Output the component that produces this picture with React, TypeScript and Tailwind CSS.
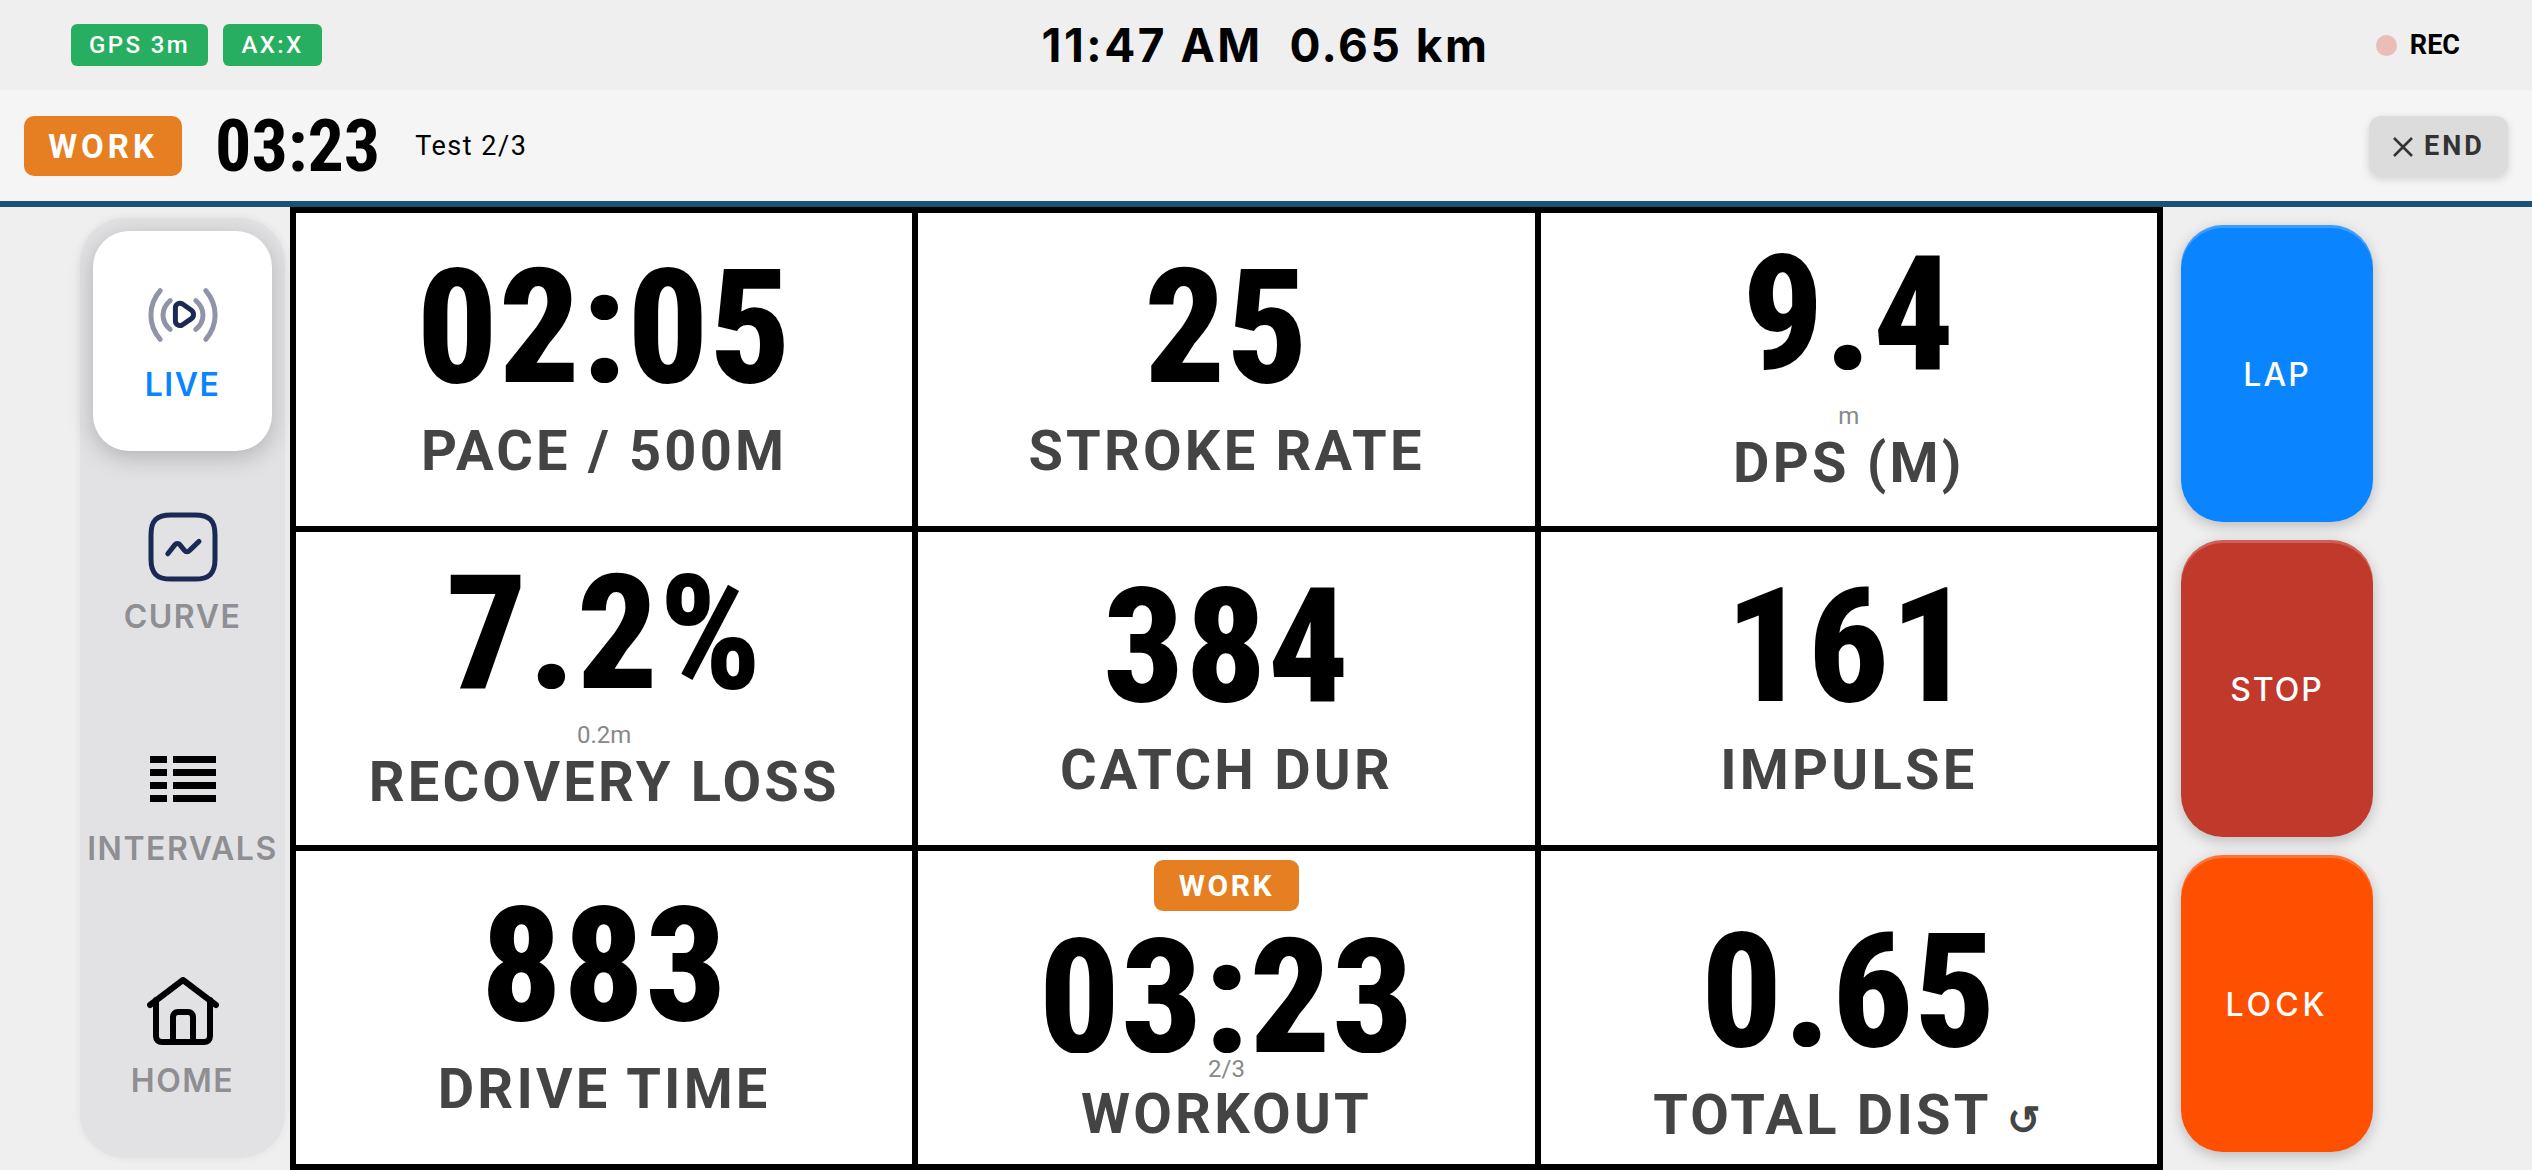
import { ReactNode } from "react";

const NavItem = ({ label, icon, active }: { label: string; icon: ReactNode; active?: boolean }) => (
  <div
    className={`flex h-[220px] w-[179px] flex-col items-center justify-center rounded-[36px] pb-[12px] ${
      active ? "bg-white shadow-[0_6px_24px_rgba(0,0,0,0.22)]" : ""
    }`}
  >
    <div className="flex h-[96px] items-center justify-center">{icon}</div>
    <span
      className={`mt-[4px] font-['Inter',sans-serif] text-[32px] leading-[36px] font-semibold tracking-[1.5px] ${
        active ? "text-[#0a84ff]" : "text-[#8e8e93]"
      }`}
    >
      {label}
    </span>
  </div>
);

const LiveIcon = () => (
  <svg width="96" height="96" viewBox="0 0 24 24" fill="none" strokeWidth="1.25" strokeLinecap="round" strokeLinejoin="round">
    <path d="M6.3 5.9C3.2 9.5 3.2 14.5 6.3 18.1M17.7 5.9C20.8 9.5 20.8 14.5 17.7 18.1M8.8 8.4C6.4 10.4 6.4 13.6 8.8 15.6M15.2 8.4C17.6 10.4 17.6 13.6 15.2 15.6" stroke="#8f94a8" />
    <path d="M10.1 10.2c0-.9.9-1.4 1.7-1l2.3 1.6c.7.5.7 1.6 0 2.1l-2.3 1.6c-.8.4-1.7-.1-1.7-1z" stroke="#1b2a55" />
  </svg>
);

const CurveIcon = () => (
  <svg width="96" height="96" viewBox="0 0 24 24" fill="none" stroke="#1b2a55" strokeWidth="1.25" strokeLinecap="round" strokeLinejoin="round">
    <path d="M9 4h6c3.6 0 5 1.4 5 5v6c0 3.6-1.4 5-5 5H9c-3.6 0-5-1.4-5-5V9c0-3.6 1.4-5 5-5z" />
    <path d="M8.2 13.7L10 11.4c.3-.4.9-.4 1.2 0l1.2 1.5c.3.4.9.4 1.2 0L16 10.6" />
  </svg>
);

const ListIcon = () => (
  <svg width="66" height="46" viewBox="0 0 66 46" fill="#000">
    {[0, 13, 26, 39].map((y) => (
      <g key={y}>
        <rect x="0" y={y} width="17" height="7" />
        <rect x="23" y={y} width="43" height="7" />
      </g>
    ))}
  </svg>
);

const HomeIcon = () => (
  <svg width="72" height="68" viewBox="0 0 72 68" fill="none" stroke="#000" strokeWidth="6" strokeLinecap="round" strokeLinejoin="round">
    <path d="M3 28L36 3l33 25" />
    <path d="M9 23v36c0 4 2.500 6 6 6h42c3.500 0 6-2 6-6V23" />
    <path d="M26 65V40c0-3 2-5 5-5h10c3 0 5 2 5 5v25" />
  </svg>
);

const Metric = ({ value, label, sub, pad = "" }: { value: string; label: ReactNode; sub?: string; pad?: string }) => (
  <div className={`flex min-w-0 flex-col items-center justify-center bg-white pb-[4px] ${pad}`}>
    <div className="mb-[16px] h-[150px] font-['Roboto',sans-serif] text-[160px] leading-[150px] font-extrabold font-stretch-condensed tracking-[1px] text-black">
      {value}
    </div>
    {sub && <div className="mt-[-2px] mb-[2px] font-['Roboto',sans-serif] text-[24px] leading-[25px] text-[#888]">{sub}</div>}
    <div className="font-['Roboto',sans-serif] text-[56px] leading-[64px] font-bold tracking-[3.2px] text-[#444]">{label}</div>
  </div>
);

const SideButton = ({ label, color, spacing }: { label: string; color: string; spacing: string }) => (
  <div className={`flex h-[297px] w-[192px] items-center justify-center rounded-[42px] pt-[3px] font-['Inter',sans-serif] text-[32px] font-medium text-white shadow-[0_4px_14px_rgba(0,0,0,0.22),inset_0_3px_0_rgba(255,255,255,0.2)] ${color} ${spacing}`}>
    {label}
  </div>
);

export default function App() {
  return (
    <div className="flex h-[1170px] w-[2532px] flex-col overflow-hidden bg-[#efefef]">
      <div className="flex h-[90px] items-center pr-[72px] pl-[71px]">
        <div className="flex flex-1 gap-[15px] font-['Roboto',sans-serif] text-[24px] font-medium tracking-[2.4px] text-white">
          <span className="flex h-[42px] w-[137px] items-center justify-center rounded-[6px] bg-[#27ae60]">GPS 3m</span>
          <span className="flex h-[42px] w-[99px] items-center justify-center rounded-[6px] bg-[#27ae60]">AX:X</span>
        </div>
        <div className="font-['Inter',sans-serif] text-[46px] font-bold tracking-[2.5px] whitespace-pre text-black">11:47 AM  0.65 km</div>
        <div className="flex flex-1 items-center justify-end gap-[13px]">
          <span className="h-[21px] w-[21px] rounded-full bg-[#ecbcb8]" />
          <span className="font-['Roboto',sans-serif] text-[27px] font-bold text-black">REC</span>
        </div>
      </div>
      <div className="flex h-[117px] items-center border-b-[6px] border-[#1a5276] bg-[#f5f5f5] px-[24px]">
        <span className="flex h-[60px] w-[158px] items-center justify-center rounded-[10px] bg-[#e67e22] pt-[2px] font-['Roboto',sans-serif] text-[33px] font-bold tracking-[4px] text-white">WORK</span>
        <span className="ml-[33px] pt-[2px] font-['Roboto',sans-serif] text-[72px] font-bold font-stretch-condensed text-black">03:23</span>
        <span className="ml-[35px] pt-[2px] font-['Roboto',sans-serif] text-[27px] tracking-[1.5px] text-black">Test 2/3</span>
        <span className="ml-auto flex h-[60px] w-[139px] items-center justify-center gap-[10px] rounded-[12px] bg-[#dcdcdc] pt-[2px] font-['Roboto',sans-serif] text-[27px] font-bold tracking-[3px] text-[#333] shadow-[0_3px_8px_rgba(0,0,0,0.15)]">
          <svg width="22" height="22" viewBox="0 0 22 22" stroke="#333" strokeWidth="2.5"><path d="M2 2l18 18M20 2L2 20" /></svg>
          END
        </span>
      </div>
      <div className="flex min-h-0 flex-1">
        <div className="mt-[11px] ml-[80px] flex h-[940px] w-[205px] flex-col items-center gap-[12px] rounded-[45px] bg-[#e2e2e5] pt-[13px] shadow-[0_0_8px_rgba(0,0,0,0.06)]">
          <NavItem label="LIVE" icon={<LiveIcon />} active />
          <NavItem label="CURVE" icon={<CurveIcon />} />
          <NavItem label="INTERVALS" icon={<ListIcon />} />
          <NavItem label="HOME" icon={<HomeIcon />} />
        </div>
        <div className="ml-[5px] grid h-[963px] w-[1873px] grid-cols-3 grid-rows-3 gap-[6px] bg-black p-[6px]">
          <Metric value="02:05" label="PACE / 500M" />
          <Metric value="25" label="STROKE RATE" />
          <Metric value="9.4" label="DPS (M)" sub="m" />
          <Metric value="7.2%" label="RECOVERY LOSS" sub="0.2m" />
          <Metric value="384" label="CATCH DUR" />
          <Metric value="161" label="IMPULSE" />
          <Metric value="883" label="DRIVE TIME" />
          <div className="flex min-w-0 flex-col items-center bg-white pt-[9px]">
            <span className="flex h-[51px] w-[145px] items-center justify-center rounded-[9px] bg-[#e67e22] font-['Roboto',sans-serif] text-[30px] font-bold tracking-[2.5px] text-white">WORK</span>
            <div className="mt-[12px] h-[130px] overflow-hidden font-['Roboto',sans-serif] text-[160px] leading-[150px] font-extrabold font-stretch-condensed tracking-[1px] text-black">03:23</div>
            <div className="mt-[3px] font-['Roboto',sans-serif] text-[24px] leading-[26px] text-[#888]">2/3</div>
            <div className="font-['Roboto',sans-serif] text-[56px] leading-[64px] font-bold tracking-[3.2px] text-[#444]">WORKOUT</div>
          </div>
          <Metric value="0.65" label={<>TOTAL DIST <span className="text-[40px]">↺</span></>} pad="pt-[58px]" />
        </div>
        <div className="mt-[18px] ml-[18px] flex flex-col gap-[18px]">
          <SideButton label="LAP" color="bg-[#0a84ff]" spacing="tracking-[2px]" />
          <SideButton label="STOP" color="bg-[#c0392b]" spacing="tracking-[2px]" />
          <SideButton label="LOCK" color="bg-[#ff4f00]" spacing="tracking-[4px]" />
        </div>
      </div>
    </div>
  );
}
